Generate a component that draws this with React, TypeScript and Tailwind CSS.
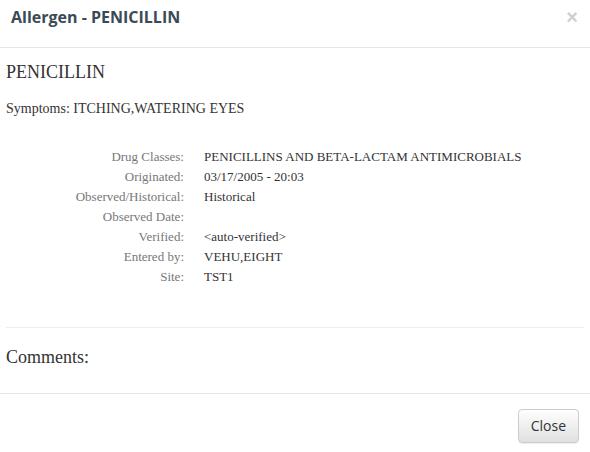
import React from "react";

const rows: [string, string][] = [
  ["Drug Classes:", "PENICILLINS AND BETA-LACTAM ANTIMICROBIALS"],
  ["Originated:", "03/17/2005 - 20:03"],
  ["Observed/Historical:", "Historical"],
  ["Observed Date:", ""],
  ["Verified:", "<auto-verified>"],
  ["Entered by:", "VEHU,EIGHT"],
  ["Site:", "TST1"],
];

export default function App() {
  return (
    <div className="w-[590px] h-[452px] bg-white overflow-hidden">
      <div className="h-[48px] border-b border-[#e5e5e5] flex items-start justify-between pl-[11px] pr-[12px] pt-[6px]">
        <h4 className="text-[16px] leading-[22px] font-bold text-[#3b4a54] font-['Open_Sans',sans-serif]">
          Allergen - PENICILLIN
        </h4>
        <span className="text-[20px] leading-[21px] font-bold text-[#cfcfcf] font-['Liberation_Sans',sans-serif] mt-[1px]">
          ×
        </span>
      </div>
      <div className="px-[6px] font-['Liberation_Serif',serif] text-[#333]">
        <div className="mt-[14px] text-[18px] leading-[20px]">PENICILLIN</div>
        <div className="mt-[19px] text-[14px] leading-[16px]">Symptoms: ITCHING,WATERING EYES</div>
        <div className="mt-[30px] grid grid-cols-[178px_1fr] gap-x-[20px] text-[13px] leading-[20px]">
          {rows.map(([k, v]) => (
            <React.Fragment key={k}>
              <div className="text-right text-[#777] h-[20px]">{k}</div>
              <div className="h-[20px]">{v}</div>
            </React.Fragment>
          ))}
        </div>
        <div className="mt-[40px] border-t border-[#eeeeee]" />
        <div className="mt-[19px] text-[18px] leading-[20px]">Comments:</div>
      </div>
      <div className="mt-[26px] border-t border-[#e5e5e5] flex justify-end pt-[15px] pr-[11px]">
        <button className="h-[34px] px-[12px] rounded-[4px] border border-[#cccccc] bg-gradient-to-b from-white to-[#e0e0e0] text-[14px] leading-[20px] text-[#333] font-['Open_Sans',sans-serif] shadow-[inset_0_1px_0_rgba(255,255,255,0.15),0_1px_1px_rgba(0,0,0,0.075)]">
          Close
        </button>
      </div>
    </div>
  );
}
